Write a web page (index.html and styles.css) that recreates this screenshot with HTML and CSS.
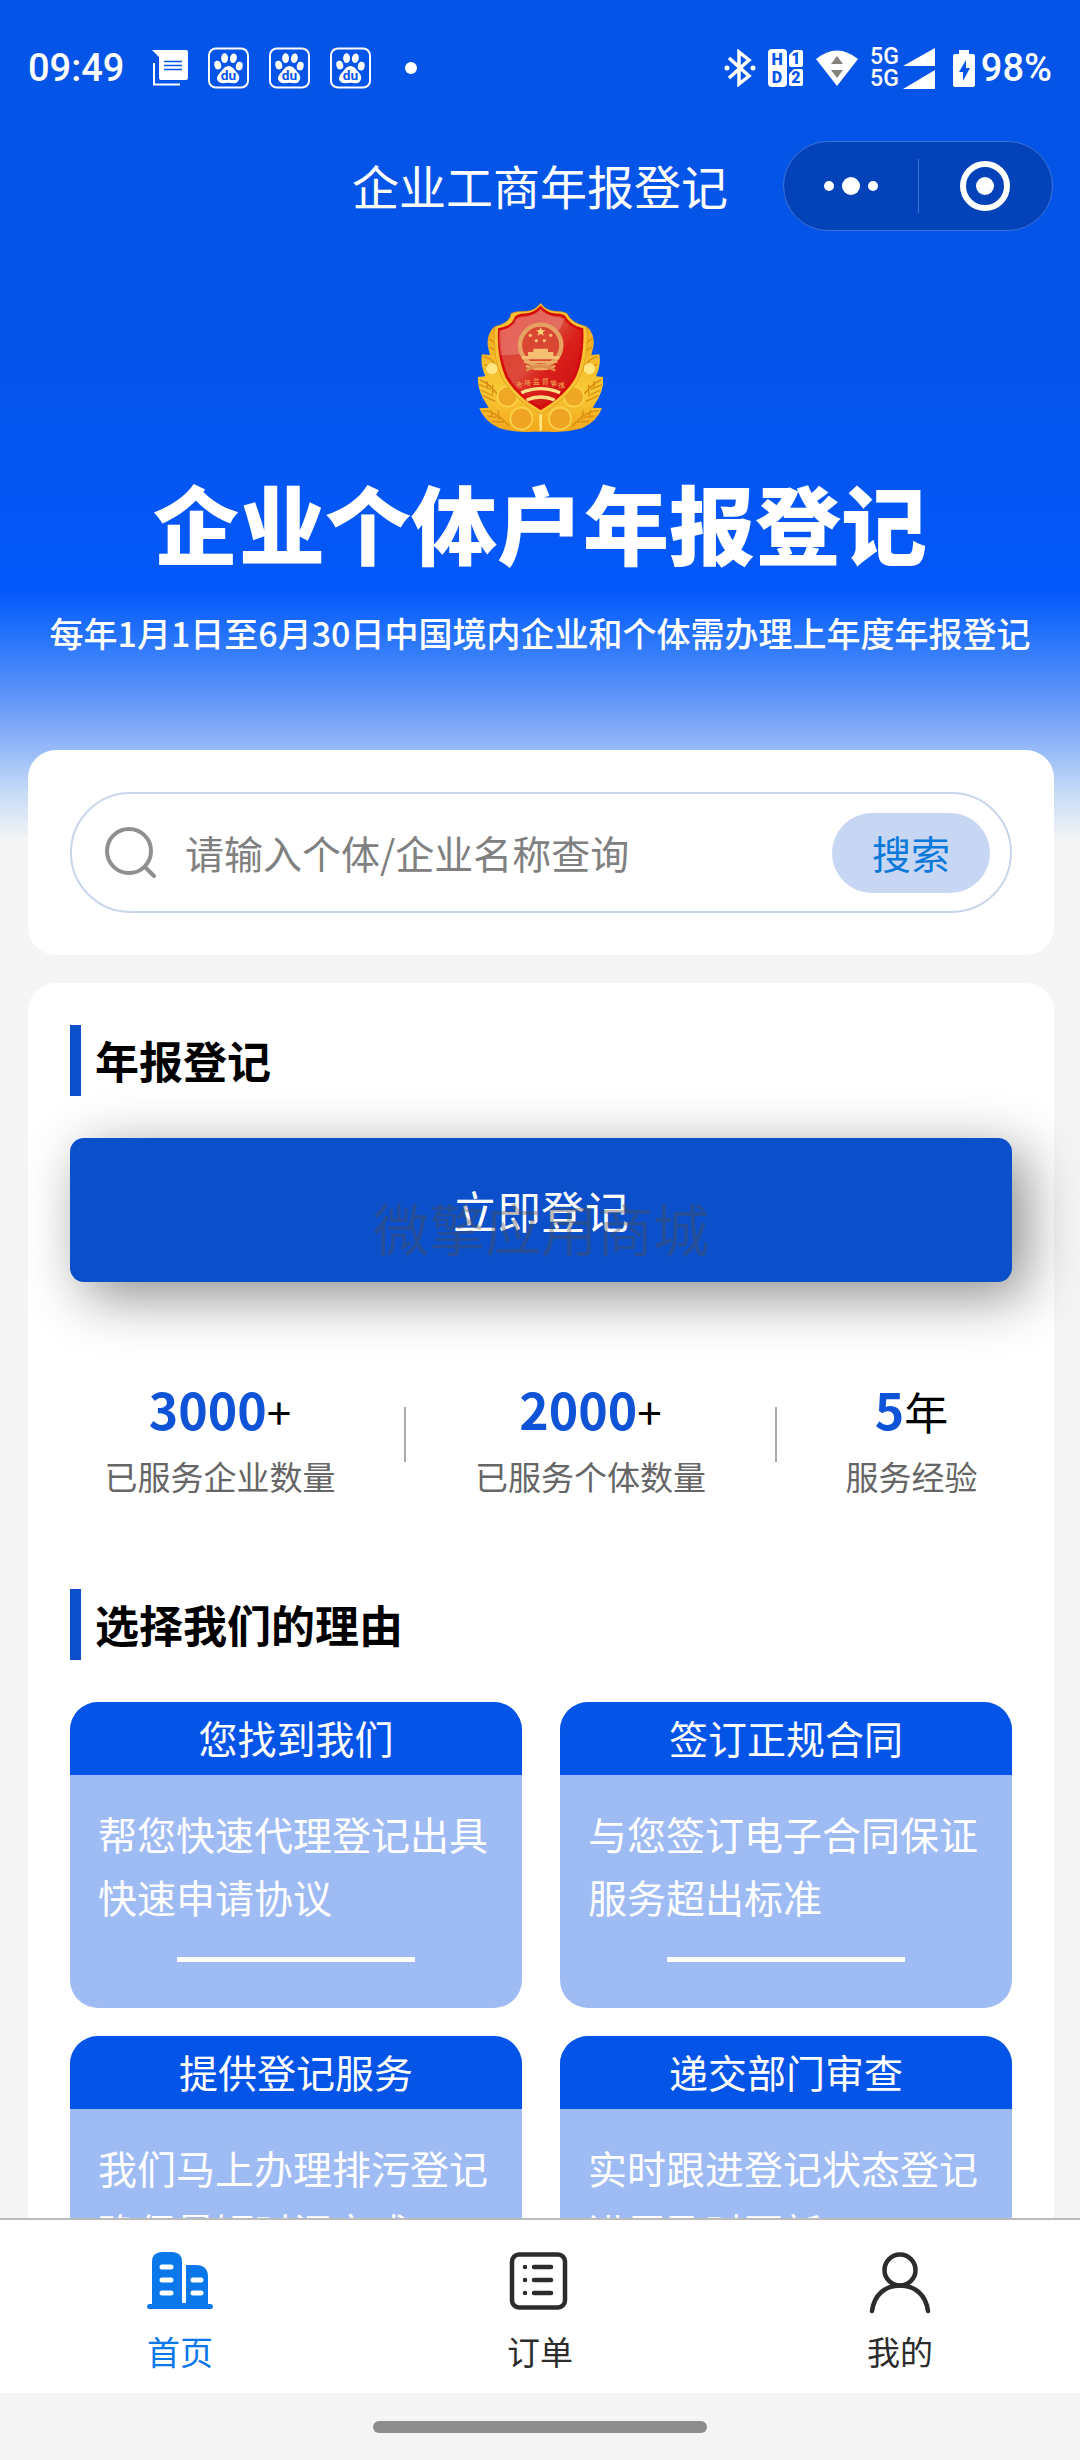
FILE: index.html
```
<!DOCTYPE html>
<html lang="zh-CN">
<head>
    <meta charset="UTF-8">
    <meta name="viewport" content="width=device-width, initial-scale=1.0">
    <title>企业工商年报登记</title>
    <link rel="stylesheet" href="styles.css">
</head>
<body>
    <div class="app">
        <div class="scroll-view">
            <div class="status-bar">
                <div class="status-left">
                    <span class="time">09:49</span>
                    <svg class="icon-msg" width="36" height="36" viewBox="0 0 36 36">
                        <path d="M0 0h34q2 0 2 2v26q0 2-2 2H9q-2 0-2-2V7z" fill="#fff"/>
                        <path d="M2 13v21.500h26" fill="none" stroke="#fff" stroke-width="2"/>
                        <path d="M12 11.500h18M12 15.500h18M12 19.500h18" stroke="#0554e8" stroke-width="1.500"/>
                    </svg>
                    <svg width="41" height="42" viewBox="0 0 42 42">
                        <g id="paw">
                            <rect x="1" y="1" width="40" height="40" rx="7" fill="none" stroke="#fff" stroke-width="2"/>
                            <g fill="#fff">
                                <ellipse cx="10" cy="18" rx="3.500" ry="4.500" transform="rotate(-15 10 18)"/>
                                <ellipse cx="17" cy="11" rx="3.500" ry="5"/>
                                <ellipse cx="26" cy="11" rx="3.500" ry="5" transform="rotate(10 26 11)"/>
                                <ellipse cx="32" cy="19" rx="3.500" ry="4.500" transform="rotate(10 32 19)"/>
                                <path d="M21 19c4 0 6 4 8 6 3 3 4 6 2 9-2 4-6 2-10 2s-8 2-11-2c-2-3 0-6 3-9 2-2 4-6 8-6z"/>
                            </g>
                            <text x="21" y="33" class="paw-text">du</text>
                        </g>
                    </svg>
                    <svg width="41" height="42" viewBox="0 0 42 42"><use href="#paw"/></svg>
                    <svg width="41" height="42" viewBox="0 0 42 42"><use href="#paw"/></svg>
                    <span class="dot"></span>
                </div>
                <div class="status-right">
                    <svg width="32" height="38" viewBox="0 0 32 38">
                        <path d="M5 9l20 18-10 8V3l10 8L5 29" fill="none" stroke="#fff" stroke-width="3.500"/>
                        <circle cx="3" cy="19" r="2.500" fill="#fff"/>
                        <circle cx="29" cy="19" r="2.500" fill="#fff"/>
                    </svg>
                    <svg width="36" height="38" viewBox="0 0 36 38">
                        <rect width="19" height="38" rx="4" fill="#fff"/>
                        <path d="M26 1h7q2 0 2 2v13q0 2-2 2H23q-2 0-2-2V6z" fill="#fff"/>
                        <path d="M26 20h7q2 0 2 2v13q0 2-2 2H23q-2 0-2-2V25z" fill="#fff"/>
                        <g class="sim-text">
                            <text x="9" y="16">H</text>
                            <text x="9" y="34">D</text>
                            <text x="28" y="15">1</text>
                            <text x="28" y="34">2</text>
                        </g>
                    </svg>
                    <svg width="42" height="36" viewBox="0 0 42 36">
                        <path d="M0 9Q21-8 42 9L21 36z" fill="#fff"/>
                        <path d="M21 6l6 8H15zM15 20h12l-6 8z" fill="#85827c"/>
                    </svg>
                    <div class="signal">
                        <div class="network"><span>5G</span><span>5G</span></div>
                        <svg width="32" height="41" viewBox="0 0 32 41">
                            <path d="M0 18L32 0v18zM0 41L32 22v19z" fill="#fff"/>
                        </svg>
                    </div>
                    <div class="battery">
                        <svg width="22" height="37" viewBox="0 0 22 37">
                            <path d="M6 0h10v4h4q2 0 2 2v29q0 2-2 2H2q-2 0-2-2V6q0-2 2-2h4z" fill="#fff"/>
                            <path d="M13 10L6 22h4v9l7-13h-4z" fill="#0554e8"/>
                        </svg>
                        <span class="percent">98%</span>
                    </div>
                </div>
            </div>

            <header class="navbar">
                <h1 class="nav-title">企业工商年报登记</h1>
                <div class="capsule">
                    <button type="button" class="capsule-btn" aria-label="更多">
                        <svg width="54" height="18" viewBox="0 0 54 18" fill="#fff">
                            <circle cx="5" cy="9" r="5"/>
                            <circle cx="27" cy="9" r="9"/>
                            <circle cx="49" cy="9" r="5"/>
                        </svg>
                    </button>
                    <span class="capsule-line"></span>
                    <button type="button" class="capsule-btn" aria-label="关闭">
                        <svg width="50" height="50" viewBox="0 0 50 50">
                            <circle cx="25" cy="25" r="22" fill="none" stroke="#fff" stroke-width="6"/>
                            <circle cx="25" cy="25" r="9" fill="#fff"/>
                        </svg>
                    </button>
                </div>
            </header>

            <section class="hero">
                <svg class="emblem" viewBox="116 70 376 396">
                    <defs>
                        <linearGradient id="gold" x1="0" y1="0" x2="0" y2="1">
                            <stop offset="0" stop-color="#f0a91f"/>
                            <stop offset="0.600" stop-color="#f8c935"/>
                            <stop offset="1" stop-color="#f2a81c"/>
                        </linearGradient>
                        <linearGradient id="red" x1="0" y1="0" x2="1" y2="1">
                            <stop offset="0" stop-color="#e2362c"/>
                            <stop offset="0.450" stop-color="#dd4a3a"/>
                            <stop offset="0.600" stop-color="#d9201a"/>
                            <stop offset="1" stop-color="#c80d12"/>
                        </linearGradient>
                        <g id="wreath">
                            <path d="M165 145Q142 170 148 205l6 24-24-2q-6 30 10 66l-22 2q-2 30 14 62l18 30-28 2q16 40 60 60 50 14 100 10h26V370L200 250z" fill="url(#gold)"/>
                            <g fill="none" stroke="#d98c13" stroke-width="4">
                                <path d="M124 304q30 10 62 56M122 318l34 14M126 334l38 18M132 350l38 18M146 308v22M162 318v28"/>
                                <path d="M132 396q40 0 80 48M146 412l30 4M160 428l36 2M156 394l6 22M178 396l4 28"/>
                                <path d="M150 180q20 8 24 30M136 234q30 6 42 40M138 258q20 4 34 26M152 205l24 14"/>
                            </g>
                            <circle cx="160" cy="270" r="17" fill="#ffe680"/>
                            <circle cx="206" cy="354" r="30" fill="#f0a824" stroke="#fbd24a" stroke-width="5"/>
                            <circle cx="248" cy="420" r="33" fill="#f0a424" stroke="#fbd24a" stroke-width="5"/>
                        </g>
                    </defs>
                    <use href="#wreath"/>
                    <use href="#wreath" transform="translate(612 0) scale(-1 1)"/>
                    <path d="M306 380v76" stroke="#ffe680" stroke-width="8"/>
                    <path d="M306 74q18 24 44 24 20 0 34 6 14 30 60 40 8 90-24 158-34 60-114 104-80-44-114-104-32-68-24-158 46-10 50-40 14-6 44-6 26 0 44-24z" fill="#f9c333" stroke="#d8921c" stroke-width="2"/>
                    <path d="M306 86q18 20 42 22 18 0 28 6 18 30 54 38 4 82-22 142-30 54-102 96-72-42-102-96-26-60-22-142 42-8 50-36 10-8 30-8 26-2 44-22z" fill="url(#red)" stroke="#d60b0b" stroke-width="8"/>
                    <path d="M306 92q18 18 42 22 18 0 28 6-30 110-190 110-8-40-4-74 40-8 48-34 10-8 30-8 26-2 46-22z" fill="#fff" opacity="0.200"/>
                    <circle cx="306" cy="200" r="62" fill="#d94632" stroke="#e6a263" stroke-width="13"/>
                    <path d="M306 146l4 9h10l-8 6 3 10-9-6-9 6 3-10-8-6h10z" fill="#ffd978"/>
                    <g fill="#f6be70">
                        <circle cx="275" cy="170" r="5"/>
                        <circle cx="336" cy="170" r="5"/>
                        <circle cx="293" cy="186" r="5"/>
                        <circle cx="317" cy="186" r="5"/>
                        <path d="M284 210h44v10h16v12h18v10H250v-10h18v-12h16z"/>
                    </g>
                    <path d="M256 250h100M262 262q44 20 88 0" fill="none" stroke="#efb165" stroke-width="6"/>
                    <path d="M262 276q44-26 88 0" fill="none" stroke="#dd8c4d" stroke-width="8"/>
                    <g class="emblem-text">
                        <text x="240" y="326" transform="rotate(14 240 326)">市</text>
                        <text x="265" y="320" transform="rotate(8 265 320)">场</text>
                        <text x="293" y="317">监</text>
                        <text x="320" y="317">督</text>
                        <text x="346" y="321" transform="rotate(-8 346 321)">管</text>
                        <text x="370" y="328" transform="rotate(-14 370 328)">理</text>
                    </g>
                    <path d="M248 342q58-24 116 0M264 364q42-18 84 0" fill="none" stroke="#ffe08a" stroke-width="10"/>
                </svg>
                <h2 class="hero-title">企业个体户年报登记</h2>
                <p class="hero-sub">每年1月1日至6月30日中国境内企业和个体需办理上年度年报登记</p>
            </section>

            <main class="content">
                <section class="card search-card">
                    <form class="search-box">
                        <svg width="52" height="52" viewBox="0 0 52 52" fill="none" stroke="#8f8f8f" stroke-width="4" stroke-linecap="round">
                            <circle cx="24" cy="24" r="22"/>
                            <path d="M40 40l9 9"/>
                        </svg>
                        <input type="text" class="search-input" placeholder="请输入个体/企业名称查询" aria-label="请输入个体/企业名称查询">
                        <button type="button" class="search-btn">搜索</button>
                    </form>
                </section>

                <section class="card main-card">
                    <h3 class="section-title">年报登记</h3>
                    <div class="register">
                        <button type="button" class="register-btn">立即登记</button>
                        <span class="watermark">微擎应用商城</span>
                    </div>

                    <div class="stats">
                        <div class="stat">
                            <p class="stat-num"><strong>3000</strong>+</p>
                            <p class="stat-label">已服务企业数量</p>
                        </div>
                        <span class="stat-line"></span>
                        <div class="stat">
                            <p class="stat-num"><strong>2000</strong>+</p>
                            <p class="stat-label">已服务个体数量</p>
                        </div>
                        <span class="stat-line"></span>
                        <div class="stat">
                            <p class="stat-num"><strong>5</strong>年</p>
                            <p class="stat-label">服务经验</p>
                        </div>
                    </div>

                    <h3 class="section-title">选择我们的理由</h3>
                    <div class="reasons">
                        <article class="reason">
                            <h4>您找到我们</h4>
                            <p>帮您快速代理登记出具快速申请协议</p>
                        </article>
                        <article class="reason">
                            <h4>签订正规合同</h4>
                            <p>与您签订电子合同保证服务超出标准</p>
                        </article>
                        <article class="reason">
                            <h4>提供登记服务</h4>
                            <p>我们马上办理排污登记确保最短时间完成</p>
                        </article>
                        <article class="reason">
                            <h4>递交部门审查</h4>
                            <p>实时跟进登记状态登记进展及时更新</p>
                        </article>
                    </div>
                </section>
            </main>
        </div>

        <nav class="tabbar">
            <a href="#" class="tab active">
                <svg width="66" height="62" viewBox="0 0 66 62">
                    <path d="M5 52V10Q5 0 15 0h10q10 0 10 10v41h4V13h10q12 0 12 12v27h3q2 0 2 2.500T64 57H2q-2 0-2-2.500T2 52z" fill="currentColor"/>
                    <path d="M15 15h9M15 28h9M15 41h9M46 28h8M46 41h8" stroke="#fff" stroke-width="5" stroke-linecap="round"/>
                </svg>
                <span>首页</span>
            </a>
            <a href="#" class="tab">
                <svg width="66" height="62" viewBox="0 0 66 62" fill="none" stroke="currentColor" stroke-width="4.500" stroke-linecap="round">
                    <rect x="5" y="2.500" width="53" height="53" rx="7"/>
                    <path d="M27 15h17M27 28h17M27 41h17M18 15h0M18 28h0M18 41h0"/>
                </svg>
                <span>订单</span>
            </a>
            <a href="#" class="tab">
                <svg width="66" height="62" viewBox="0 0 66 62" fill="none" stroke="currentColor" stroke-width="4.500" stroke-linecap="round">
                    <circle cx="33" cy="18" r="15.500"/>
                    <path d="M5 59C7 43 18 33.500 33 33.500s26 9.500 28 25.500"/>
                </svg>
                <span>我的</span>
            </a>
        </nav>
        <div class="home-indicator"><span></span></div>
    </div>
</body>
</html>
```
FILE: styles.css
```
* {
    margin: 0;
    padding: 0;
    box-sizing: border-box;
}

body {
    font-family: "Noto Sans CJK SC", sans-serif;
    color: #000;
    background: #f5f5f5;
}

button,
input {
    font-family: inherit;
    border: none;
    background: none;
}

svg {
    display: block;
    flex-shrink: 0;
}

.app {
    height: 100vh;
    display: flex;
    flex-direction: column;
}

.scroll-view {
    flex: 1;
    min-height: 0;
    overflow: hidden;
    background: linear-gradient(180deg, #0554e8 0, #0554e8 300px, #0458fa 590px, #2070fb 630px, #5891f9 690px, #97baf8 750px, #c3daf7 790px, #f5f5f5 840px);
}

/* Status bar */
.status-bar {
    display: flex;
    justify-content: space-between;
    align-items: center;
    height: 136px;
    padding: 0 28px;
    color: #fff;
    font-family: Roboto, sans-serif;
    font-weight: 500;
}

.status-left,
.status-right,
.signal,
.battery {
    display: flex;
    align-items: center;
}

.status-left {
    gap: 20px;
}

.status-right {
    gap: 12px;
}

.time,
.percent {
    font-size: 38px;
}

.icon-msg {
    margin-left: 8px;
}

.dot {
    width: 12px;
    height: 12px;
    margin-left: 14px;
    border-radius: 50%;
    background: #fff;
}

.paw-text {
    font-family: Roboto, sans-serif;
    font-size: 14px;
    font-weight: 700;
    fill: #0554e8;
    text-anchor: middle;
}

.sim-text {
    font-size: 16px;
    font-weight: 900;
    fill: #0554e8;
    text-anchor: middle;
}

.signal {
    gap: 4px;
}

.network {
    display: flex;
    flex-direction: column;
    font-size: 23px;
    line-height: 22px;
}

.battery {
    gap: 6px;
    margin-left: 6px;
}

/* Nav bar */
.navbar {
    display: grid;
    grid-template-columns: 1fr auto 1fr;
    align-items: center;
    height: 100px;
    padding: 0 27px;
    color: #fff;
}

.nav-title {
    grid-column: 2;
    padding-bottom: 2px;
    font-size: 47px;
    font-weight: 400;
    line-height: 70px;
}

.capsule {
    justify-self: end;
    display: flex;
    align-items: center;
    width: 270px;
    height: 90px;
    border: 1px solid #3d71d4;
    border-radius: 45px;
    background: #0442b9;
}

.capsule-btn {
    flex: 1;
    display: flex;
    justify-content: center;
}

.capsule-line {
    width: 1px;
    height: 54px;
    background: #3d71d4;
}

/* Hero */
.hero {
    display: flex;
    flex-direction: column;
    align-items: center;
    padding-top: 66px;
    color: #fff;
    text-align: center;
}

.emblem {
    width: 126px;
    height: 132px;
}

.emblem-text {
    font-size: 20px;
    fill: #f3b45c;
    text-anchor: middle;
}

.hero-title {
    margin-top: 38px;
    font-size: 86px;
    font-weight: 900;
    line-height: 100px;
}

.hero-sub {
    margin-top: 36px;
    font-size: 34px;
    font-weight: 500;
    line-height: 50px;
}

/* Content */
.content {
    display: flex;
    flex-direction: column;
    gap: 28px;
    padding: 92px 26px 0 28px;
}

.card {
    padding: 42px;
    border-radius: 28px;
    background: #fff;
}

.search-box {
    display: flex;
    align-items: center;
    height: 121px;
    padding: 0 20px 0 33px;
    border: 2px solid #c9d6ea;
    border-radius: 61px;
}

.search-input {
    flex: 1;
    min-width: 0;
    margin-left: 28px;
    padding-bottom: 2px;
    font-size: 39px;
    outline: none;
}

.search-input::placeholder {
    color: #808080;
}

.search-btn {
    width: 158px;
    height: 80px;
    padding-bottom: 2px;
    border-radius: 40px;
    background: #c6d6f3;
    color: #0b78db;
    font-size: 39px;
}

.section-title {
    padding-left: 14px;
    border-left: 11px solid #0b4fcb;
    font-size: 44px;
    font-weight: 700;
    line-height: 71px;
}

.register {
    position: relative;
    margin-top: 42px;
}

.register-btn {
    display: block;
    width: 100%;
    height: 144px;
    border-radius: 14px;
    background: #0b4fcb;
    box-shadow: 14px 14px 56px rgba(0, 0, 0, 0.45);
    color: #fff;
    font-size: 44px;
}

.watermark {
    position: absolute;
    left: 0;
    right: 0;
    bottom: 13px;
    color: rgba(80, 80, 80, 0.4);
    font-size: 56px;
    line-height: 84px;
    text-align: center;
    pointer-events: none;
}

/* Stats */
.stats {
    display: flex;
    justify-content: space-around;
    align-items: center;
    padding: 86px 0 88px;
}

.stat {
    text-align: center;
}

.stat-num {
    font-size: 44px;
    line-height: 80px;
}

.stat-num strong {
    color: #0f54d6;
    font-size: 50px;
    font-weight: 700;
}

.stat-label {
    color: #666;
    font-size: 33px;
    line-height: 50px;
}

.stat-line {
    width: 2px;
    height: 55px;
    background: #aaa;
}

/* Reasons */
.reasons {
    display: grid;
    grid-template-columns: 1fr 1fr;
    gap: 28px 38px;
    margin-top: 42px;
}

.reason {
    border-radius: 28px;
    background: #9fbbf4;
    color: #fff;
    overflow: hidden;
}

.reason h4 {
    padding-bottom: 2px;
    background: #0554e8;
    font-size: 39px;
    font-weight: 400;
    line-height: 71px;
    text-align: center;
}

.reason p {
    padding: 27px 28px 29px;
    font-size: 39px;
    line-height: 63px;
}

.reason::after {
    content: "";
    display: block;
    width: 238px;
    height: 5px;
    margin: 0 auto 46px;
    background: #fff;
}

/* Tab bar */
.tabbar {
    display: flex;
    height: 175px;
    border-top: 2px solid #bbb;
    background: #fff;
}

.tab {
    flex: 1;
    display: flex;
    flex-direction: column;
    align-items: center;
    gap: 12px;
    padding-top: 32px;
    color: #2c2c2c;
    font-size: 33px;
    line-height: 50px;
    text-decoration: none;
}

.tab.active {
    color: #0a78ea;
}

.home-indicator {
    display: flex;
    justify-content: center;
    align-items: center;
    height: 67px;
    background: #f5f5f5;
}

.home-indicator span {
    width: 31%;
    height: 12px;
    border-radius: 6px;
    background: #8d8d8d;
}
```
